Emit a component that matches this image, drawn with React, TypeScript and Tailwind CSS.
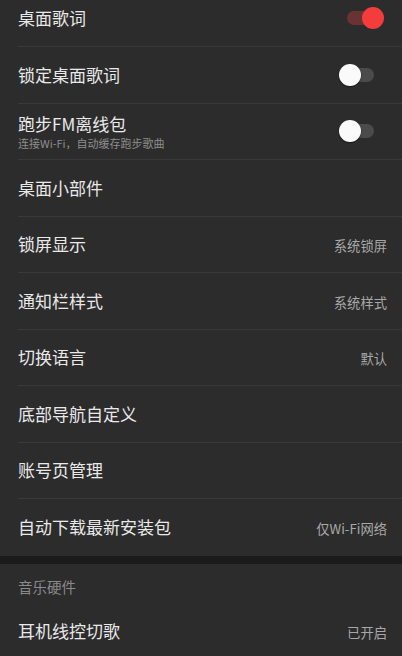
import { ReactNode } from "react";

type Row = {
  title: string;
  sub?: string;
  value?: string;
  toggle?: boolean;
};

const ROWS: Row[] = [
  { title: "桌面歌词", toggle: true },
  { title: "锁定桌面歌词", toggle: false },
  { title: "跑步FM离线包", sub: "连接Wi-Fi，自动缓存跑步歌曲", toggle: false },
  { title: "桌面小部件" },
  { title: "锁屏显示", value: "系统锁屏" },
  { title: "通知栏样式", value: "系统样式" },
  { title: "切换语言", value: "默认" },
  { title: "底部导航自定义" },
  { title: "账号页管理" },
  { title: "自动下载最新安装包", value: "仅Wi-Fi网络" },
];

function Toggle({ on }: { on: boolean }) {
  return (
    <div className="relative h-[22px] w-[38px]">
      <div
        className={
          on
            ? "absolute left-[10px] top-[4px] h-[14px] w-[28px] rounded-full bg-[#6a3333]"
            : "absolute left-[4px] top-[4px] h-[14px] w-[33px] rounded-full bg-[#4b4b4b]"
        }
      />
      <div
        className={
          on
            ? "absolute right-[-9px] top-0 h-[22px] w-[22px] rounded-full bg-[#f43c3c]"
            : "absolute left-[2px] top-0 h-[22px] w-[22px] rounded-full bg-[#fafafa] shadow-[0_1px_2px_rgba(0,0,0,0.4)]"
        }
      />
    </div>
  );
}

function SettingRow({ row, last }: { row: Row; last?: boolean }) {
  let right: ReactNode = null;
  if (row.toggle !== undefined) right = <Toggle on={row.toggle} />;
  else if (row.value)
    right = <span className="text-[13.3px] text-[#a8a8a8]">{row.value}</span>;

  return (
    <div className="pl-[18px]">
      <div
        className={
          "flex h-[56.5px] items-center justify-between pr-[15px] " +
          (last ? "" : "border-b border-[#393939]")
        }
      >
        <div className="flex flex-col">
          <span className="text-[17px] leading-[22px] text-[#e9e9e9]">{row.title}</span>
          {row.sub && (
            <span className="mt-[1px] text-[11px] leading-[14px] text-[#8e8e8e]">{row.sub}</span>
          )}
        </div>
        <div className={row.toggle !== undefined ? "mr-[12px]" : ""}>{right}</div>
      </div>
    </div>
  );
}

export default function App() {
  return (
    <div
      className="h-[656px] w-[402px] overflow-hidden bg-[#2c2c2c]"
      style={{ fontFamily: '"Noto Sans CJK SC", "Noto Sans", sans-serif' }}
    >
      <div className="-mt-[9.5px]">
        {ROWS.map((r, i) => (
          <SettingRow key={r.title} row={r} last={i === ROWS.length - 1} />
        ))}
      </div>
      <div className="h-[8px] bg-[#1b1b1b]" />
      <div className="h-[40px] pl-[18px] pt-[13px] text-[14.5px] leading-[20px] text-[#8a8a8a]">
        音乐硬件
      </div>
      <SettingRow row={{ title: "耳机线控切歌", value: "已开启" }} />
    </div>
  );
}
